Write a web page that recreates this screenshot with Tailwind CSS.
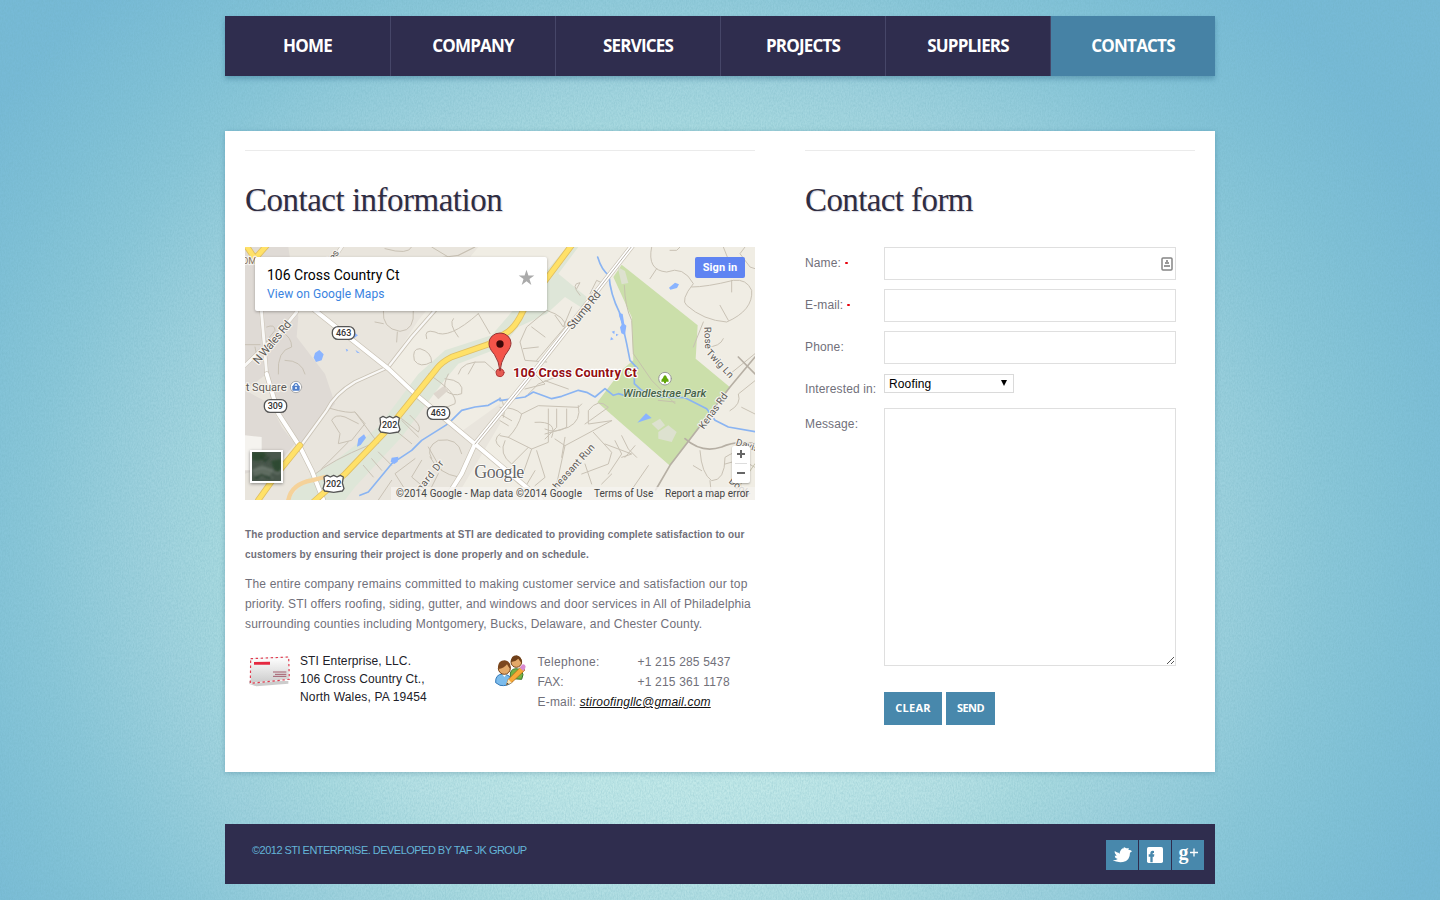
<!DOCTYPE html>
<html lang="en">
<head>
<meta charset="utf-8">
<title>STI Enterprise - Contacts</title>
<script src="https://cdn.jsdelivr.net/npm/@tailwindcss/browser@4"></script>
</head>
<body class="relative h-[900px] overflow-hidden bg-[#78b8d0] font-['Liberation_Sans',sans-serif] text-[12px] leading-5 text-[#71707a]">
<div class="absolute inset-0 -z-10 bg-[radial-gradient(ellipse_840px_740px_at_680px_535px,#c8edec_0%,#c1e8e8_35%,#b7e1e5_46%,#a9dae0_54%,#9fd2de_63%,#8ac7d9_77%,#80c1d7_87%,#77bad6_100%)]"></div>
<svg class="absolute inset-0 -z-10 opacity-30" width="1440" height="900"><filter id="grain" x="0" y="0" width="100%" height="100%"><feTurbulence type="fractalNoise" baseFrequency="0.75 0.4" numOctaves="2" seed="4"/><feColorMatrix values="0 0 0 0 .15  0 0 0 0 .42  0 0 0 0 .5  1.6 0 0 0 -.5"/></filter><rect width="1440" height="900" filter="url(#grain)"/></svg>

<div class="mx-auto flex w-[990px] flex-col pt-4">
  <nav class="grid h-[60px] grid-cols-[166px_165px_165px_165px_165px_164px] bg-[#2f2d4e] text-center font-['Open_Sans',sans-serif] text-[17px] leading-[60px] font-bold tracking-[-0.8px] text-white shadow-[0_3px_5px_rgba(30,90,120,0.35)]">
    <a class="border-r border-[#464668]">HOME</a>
    <a class="border-r border-[#464668]">COMPANY</a>
    <a class="border-r border-[#464668]">SERVICES</a>
    <a class="border-r border-[#464668]">PROJECTS</a>
    <a class="border-r border-[#464668]">SUPPLIERS</a>
    <a class="bg-[#4682a5]">CONTACTS</a>
  </nav>

  <main class="mt-[55px] flex h-[641px] gap-[50px] bg-white px-5 pt-[19px] shadow-[0_1px_5px_rgba(30,90,120,0.3)]">
    <section class="w-[510px] shrink-0 border-t border-[#ebebeb]">
      <h2 class="mt-[29px] h-10 font-['Liberation_Serif',serif] text-[33px] leading-10 tracking-[-0.5px] whitespace-nowrap text-[#2f2d42] [text-shadow:1px_1px_1px_#d5d5df]">Contact information</h2>
      <div class="relative mt-[27px] h-[253px] overflow-hidden font-[Roboto,sans-serif]">
        <svg class="block" width="510" height="253" viewBox="0 0 1530 759" preserveAspectRatio="none" fill="none" stroke-linejoin="round" stroke-linecap="round">
          <rect width="1530" height="759" fill="#f0ede4"/>
          <path fill="#e9e5dd" d="M0 0H700L520 220 430 360 640 560 765 470V530L640 740 620 759H0z"/>
          <path fill="#dfdad5" d="M0 0H130L160 210 155 270 240 381 270 470 165 590 100 500 65 381 0 430zM0 430L75 470 110 540 150 590 100 650 0 680z"/>
          <path fill="#f5f3ef" d="M0 565L50 570V615L15 630V670H0z"/>
          <path fill="#dee6d8" d="M965 0H1000L940 80 1025 150 1015 185 960 150 905 200 820 240 770 300 640 350 590 410 470 570 330 720 300 759H130L180 700 260 650 400 540 520 381 600 310 740 265 830 160z"/>
          <path fill="#cbdfaa" d="M1130 53L1358 235 1352 335 1455 421 1275 656 1057 466 1130 370 1165 340 1160 210 1105 90z"/>
          <path fill="#dde1cf" d="M1118 60L1140 72 1150 108 1130 112zM1220 530l25-15 15 20-20 15zM1240 555l30-20 25 20-15 30-40-10z"/>
          <g stroke="#c9c2b5" stroke-width="3">
            <path d="M390 225L415 230M415 190Q410 245 465 253Q510 250 505 190M457 255L455 285M0 293H45M30 300L40 350M65 240Q90 230 90 250L62 285 110 255Q140 270 140 300 95 310 100 381M180 381Q170 340 120 340M500 0Q490 25 420 5M560 0L610 30M640 25L690 0M545 275Q535 245 570 255 610 280 700 200M625 215Q610 230 640 270M700 200L735 260M560 345Q525 365 508 340 500 305 525 305 560 315 560 345M640 381Q650 340 720 345L760 381M690 345L670 381"/>
            <path d="M255 484Q310 500 330 495L400 590M330 495L360 530 320 580 280 590 285 560 260 520Q270 500 300 510L340 530M310 585L230 665M205 685Q260 640 370 595M440 541L500 590M470 520L520 570M495 505L510 520Q530 540 520 555L470 515M400 615L440 655M380 635L410 670M355 655L385 690M550 381Q640 440 630 470 590 490 560 480M600 395Q660 400 650 440 625 450 600 430 595 410 610 381M560 635Q540 600 580 580 640 570 650 620M555 630Q580 680 640 690M530 640L500 690 560 740M510 635L450 680 500 759M550 600L590 670M580 680L540 759M440 700L400 759M765 560Q740 580 765 600"/>
            <g transform="translate(765 0)"><path d="M140 190Q200 210 195 240L110 340M140 190L80 240 60 285 75 340 140 345M95 240L135 270M70 305L115 300M165 205L190 240 215 180M240 145Q210 110 240 107L230 125M270 140L290 100 310 110M455 0Q440 70 500 75 550 55 580 110 540 160 560 175 610 220 680 225 760 190 755 130 740 95 700 100 620 120 575 120M470 65L450 95M510 10H530L540 0M735 0L720 20 750 60 765 65M670 0L690 50 660 75M695 100V135M660 175L685 220M670 275Q660 300 620 300M690 381L765 320M610 225L580 300"/></g>
            <g transform="translate(0 381)"><path d="M765 100Q810 100 830 120L880 95 1000 100 1010 90M830 120Q820 160 790 190L765 185M790 190L860 225 910 205V105M875 230L900 310 870 335M860 225L830 310M935 105V160L900 195M965 105V160Q930 180 900 165M1000 95Q1010 140 970 160L900 180M1020 150L1090 100Q1060 70 1030 110V150L1100 140M930 195L960 215 935 330M960 190L950 250M1045 175L1100 235 1090 270 1010 300M1100 140L960 215M1080 210L1160 240 1130 250M1130 185L1150 225 1175 250M1110 200L1130 240 1090 300M1100 300L1070 330M1170 215L1140 250M1020 270L1040 330M1210 275L1165 340M850 60L880 30 930 10M900 20L970 45M870 0L900 30 840 45M800 300Q810 330 840 340L870 290M765 120L800 140M765 140L790 155M780 200Q760 240 800 270L850 220M765 70Q785 100 775 130M870 145Q940 140 920 190"/><path d="M1455 110Q1490 90 1480 60L1530 20M1365 230Q1370 300 1400 320 1440 320 1440 250 1470 230 1500 230M1440 270Q1490 250 1530 280M1345 275L1370 290M1395 320L1400 370M1490 100L1530 120M1480 320L1500 360"/></g>
          </g>
          <path d="M1138 115Q1140 180 1160 220L1165 320 1220 400 1290 470M1240 460L1290 465M1455 759L1530 650" stroke="#c5c2ac" stroke-width="3"/>
          <path d="M1232 729L1275 655 1455 420 1530 330M1320 575Q1370 620 1430 600 1470 580 1530 590M1480 330L1530 381" stroke="#b6afa4" stroke-width="5"/>
          <path d="M565 35L640 25 690 0" stroke="#c9c2b5" stroke-width="3"/>
          <path d="M1058 30Q1070 70 1092 85 1095 140 1125 200L1135 245 1145 290 1155 340 1178 365M1168 381V410L1190 430 1240 450 1320 452 1385 485 1410 520 1450 540 1530 554M765 461L840 450 865 435 920 455 950 448 1000 430 1025 436 1050 450 1080 425 1105 445 1120 440 1140 446 1190 430M345 745L370 735 440 650 500 610 530 580 610 530 650 490 690 480 730 475 765 455" stroke="#8ab4f2" stroke-width="5"/>
          <g fill="#8ab4ff"><path d="M210 318l13-9 13 13-6 18-17 5-7-13zM325 255l14 10-12 9zM331 308l14 11-9-2zM302 305l8 4-5 5zM1272 122l18-15 12 5-6 11-20 5zM1121 197l12 4 5 30 6 5-4 28-11-5-4-18 7-10-9-22zM1100 254l9-3-1 11zM1113 260l8 3-8 5zM1098 270l8 7-10 3zM340 575l17-13 6 10-16 22-11 5zM440 632l20-3-2 15-10 7-11-7zM1177 527l26-28 17 14-28 9z"/></g>
          <g stroke="#c9c2b5" stroke-width="12"><path d="M570 190L500 270 430 360 330 405Q270 440 245 490L165 600M155 195L110 250 0 355M175 170L290 0M35 30L50 200 65 381"/></g>
          <g stroke="#f9f8f6"><path stroke-width="7" d="M570 190L500 270 430 360 330 405Q270 440 245 490L165 600"/><path stroke-width="9" d="M155 195L110 250 0 355M175 170L290 0M35 30L50 200 65 381"/></g>
          <g stroke="#c9c2b5" stroke-width="16"><path d="M210 190L430 365 515 445 690 591 890 759M65 381L100 500 165 600 200 670 235 759M1165 -8L870 370 690 591 650 680 600 759"/></g>
          <g stroke="#fff" stroke-width="12"><path d="M210 190L430 365 515 445 690 591 890 759M65 381L100 500 165 600 200 670 235 759M1165 -8L870 370 690 591 650 680 600 759"/></g>
          <path d="M1165 -8L870 370 690 591" stroke="#b9b3aa" stroke-width="3"/>
          <path d="M130 759Q140 710 200 700L240 690" stroke="#f5d29a" stroke-width="13"/>
          <g stroke="#e0bf62" stroke-width="19"><path d="M0 -10L30 35 65 -5M980 -5L905 95 835 190Q810 245 780 260L730 292 620 330Q590 345 575 365L430 545 300 681 205 765M165 595L100 675 40 759"/></g>
          <g stroke="#ffe168" stroke-width="14"><path d="M0 -10L30 35 65 -5M980 -5L905 95 835 190Q810 245 780 260L730 292 620 330Q590 345 575 365L430 545 300 681 205 765M165 595L100 675 40 759"/></g>
          <path d="M565 440L595 418 610 430 580 457z" fill="#ddd6cd"/>

          <g font-family="Roboto, sans-serif" font-size="34" fill="#5d5a56" stroke="#f5f2ed" stroke-width="7" paint-order="stroke">
            <text x="-10" y="51" fill="#8a7562" font-size="29">OM</text>
            <text transform="translate(262 48) rotate(-55)" font-size="29">les</text>
            <text transform="translate(40 353) rotate(-50)" textLength="157">N Wales Rd</text>
            <text transform="translate(982 250) rotate(-51)" textLength="138">Stump Rd</text>
            <text transform="translate(1378 240) rotate(88)" font-size="29" textLength="66">Rose</text>
            <text transform="translate(1382 318) rotate(47)" font-size="29" textLength="105">Twig Ln</text>
            <text transform="translate(1376 548) rotate(-54)" font-size="30" textLength="125">Kenas Rd</text>
            <text transform="translate(937 728) rotate(-48)" font-size="30" textLength="170">heasant Run</text>
            <text transform="translate(528 735) rotate(-51)" font-size="30" textLength="110">nard Dr</text>
            <text transform="translate(1471 594) rotate(17)" font-size="29">Davis</text>
            <text transform="translate(1450 706) rotate(38)" font-size="29">Dooly</text>
            <text x="2" y="431" textLength="123">t Square</text>
            <text x="1134" y="450" font-style="italic" font-weight="500" font-size="33" fill="#47634b" stroke="#e5eeda" stroke-width="5" textLength="250" lengthAdjust="spacingAndGlyphs">Windlestrae Park</text>
          </g>
          <g fill="#fff" stroke="#555" stroke-width="4">
            <rect x="262" y="239" width="67" height="38" rx="17"/><rect x="547" y="479" width="67" height="38" rx="17"/><rect x="58" y="458" width="67" height="38" rx="17"/>
            <path id="us" d="M405 513L414 508 424 513 434 508 444 513 454 508 463 513 460 531 465 548 460 555 434 559 407 555 402 548 407 531z"/><use href="#us" x="-168" y="177"/>
          </g>
          <g font-family="Roboto, sans-serif" font-size="27" font-weight="500" fill="#333" text-anchor="middle"><text x="296" y="268">463</text><text x="580" y="508">463</text><text x="91" y="487">309</text><text x="434" y="544">202</text><text x="266" y="721">202</text></g>
          <circle cx="153" cy="420" r="17" fill="#fff" stroke="#aaa" stroke-width="3"/><rect x="142" y="416" width="22" height="15" rx="2" fill="#507fca"/><path d="M146 417Q153 401 160 417" stroke="#507fca" stroke-width="4"/><circle cx="153" cy="423" r="3" fill="#fff"/>
          <circle cx="1260" cy="395" r="19" fill="#fff" stroke="#999" stroke-width="3"/><path d="M1260 384Q1266 388 1266 393 1272 397 1271 404H1263V409H1257V404H1249Q1248 397 1254 393 1254 388 1260 384z" fill="#62a60a"/>
          <circle cx="765" cy="377" r="12" fill="#e55a52" stroke="#b53a3a" stroke-width="3"/>
          <path d="M765 371Q762 343 748 322C732 304 732 294 732 288A33 30 0 0 1 798 288C798 301 789 312 780 325Q768 345 765 371z" fill="#f45449" stroke="#943132" stroke-width="3"/><circle cx="765" cy="291" r="11" fill="#3d0808"/>
          <text x="804" y="391" font-family="Roboto, sans-serif" font-weight="700" font-size="39" fill="#940f13" stroke="#fff" stroke-width="7" paint-order="stroke" textLength="372">106 Cross Country Ct</text>
          <text x="688" y="693" font-family="Liberation Serif, serif" font-size="54" fill="#666" stroke="#fff" stroke-width="5" paint-order="stroke" textLength="150">Google</text>
        </svg>
        <div class="absolute top-[10px] left-[10px] h-[54px] w-[292px] rounded-[2px] bg-white pt-[9px] pl-3 shadow-[0_1px_3px_rgba(0,0,0,0.3)]">
          <div class="text-[14px] leading-[19px] whitespace-nowrap text-black">106 Cross Country Ct</div>
          <div class="text-[12px] leading-[19px] tracking-[0.07px] whitespace-nowrap text-[#3a84df]">View on Google Maps</div>
          <svg class="absolute top-3 right-3" width="17" height="17" viewBox="0 0 24 24"><path fill="#aaa" d="M12 1l2.700 8H23l-6.800 5 2.600 8.500L12 17.300 5.200 22.500 7.800 14 1 9h8.300z"/></svg>
        </div>
        <div class="absolute top-[10px] right-[10px] h-[21px] w-[50px] rounded-[2px] bg-[#5f84f2] text-center text-[11px] leading-[21px] font-bold tracking-[0.1px] text-white">Sign in</div>
        <div class="absolute top-[203px] left-[5px] size-[33px] border-2 border-white bg-[#48564b] shadow-[0_1px_3px_rgba(0,0,0,0.4)]">
          <svg width="29" height="29" fill="none"><defs><filter id="soft"><feGaussianBlur stdDeviation="0.8"/></filter></defs><g filter="url(#soft)"><path fill="#2f4a30" d="M0 0h12l3 4-8 5-7-1zM19 9l10-2v13l-7-2z"/><path fill="#5f6c61" d="M2 17l8-4 6 3 6 1-4 7-9 2-8-3z"/><path stroke="#77827a" d="M0 19q12-6 20 0t9-1M11 22l10 4"/><path stroke="#2c4230" stroke-width="2" d="M8 4l5 5 4-4M3 26l7-3 9 3"/></g></svg>
        </div>
        <div class="absolute top-[199px] left-[487px] flex h-[37px] w-[18px] flex-col items-center rounded-[2px] bg-white shadow-[0_1px_2px_rgba(0,0,0,0.3)]">
          <svg width="18" height="37" stroke="#666" stroke-width="2"><path d="M5 8h8M9 4v8M5 27h8"/><path stroke="#ddd" stroke-width="1" d="M3 17.500h12"/></svg>
        </div>
        <div class="absolute right-0 bottom-0 flex h-[13px] w-[364px] bg-[#f5f3ef]/80 pl-[5px] text-[10px] leading-[14px] whitespace-nowrap text-[#444]"><span class="w-[198px] tracking-[0.14px]">©2014 Google - Map data ©2014 Google</span><span class="w-[71px]">Terms of Use</span><span class="tracking-[0.02px]">Report a map error</span></div>
      </div>
      <p class="mt-[25px] text-[10px] font-bold tracking-[0.12px] whitespace-nowrap">The production and service departments at STI are dedicated to providing complete satisfaction to our<br>customers by ensuring their project is done properly and on schedule.</p>
      <p class="mt-[9px] tracking-[0.17px] whitespace-nowrap">The entire company remains committed to making customer service and satisfaction our top<br><span class="tracking-[0.13px]">priority. STI offers roofing, siding, gutter, and windows and door services in All of Philadelphia</span><br>surrounding counties including Montgomery, Bucks, Delaware, and Chester County.</p>
      <div class="mt-[17px] flex">
        <svg class="mt-px ml-[3px] w-[42px] shrink-0" width="42" height="36" viewBox="0 0 126 108"><defs><linearGradient id="env" x2="0" y2="1"><stop stop-color="#fff"/><stop offset="1" stop-color="#cbcbcb"/></linearGradient></defs><path d="M3 87h118v8L25 103 4 96z" fill="#999" opacity=".5"/><path d="M8 20L122 15 124 82 7 94z" fill="url(#env)" stroke="#eee" stroke-width="3"/><path d="M8 20L122 15 124 82 7 94z" fill="none" stroke="#e1394d" stroke-width="3.500" stroke-dasharray="7 8"/><path d="M18 30l48-1v9H18z" fill="#e52840"/><path d="M75 60h40M81 67h34M75 73h40" stroke="#974256" stroke-width="2.500"/></svg>
        <p class="mt-px ml-[10px] w-[194px] leading-[18px] tracking-[0.12px] text-[#202028]">STI Enterprise, LLC.<br>106 Cross Country Ct.,<br><span class="tracking-[0.17px]">North Wales, PA 19454</span></p>
        <svg class="mt-px w-8 shrink-0" width="32" height="36" viewBox="0 0 96 108"><path d="M49 72Q47 52 65 50 83 50 87 68L83 82 55 80z" fill="#75b344" stroke="#39752a" stroke-width="3"/><circle cx="67" cy="30" r="16" fill="#e3a969" stroke="#754319" stroke-width="3"/><path d="M51 30Q50 11 68 10 85 14 83 33 77 27 73 20 65 29 51 30z" fill="#704019"/><path d="M5 92Q3 68 25 66 50 66 55 90 40 104 18 100z" fill="#7cbcec" stroke="#3379b8" stroke-width="3"/><path d="M23 64L31 75 40 64" fill="#fff"/><circle cx="31" cy="49" r="18" fill="#e3a969" stroke="#754319" stroke-width="3"/><path d="M13 51Q9 26 32 25 53 29 49 52 42 43 39 37 30 49 13 51z" fill="#7c471e"/><path d="M37 99L43 82 82 43 93 54 53 92z" fill="#f7a936" stroke="#a56218" stroke-width="2"/><path d="M77 47L84 38Q89 35 94 41 97 46 88 57z" fill="#d98ad0"/><path d="M37 99L43 82 53 92z" fill="#ffe6b8"/><path d="M37 99l3-7 4 4z" fill="#333"/></svg>
        <div class="mt-px ml-[12px] w-[218px] tracking-[0.18px] whitespace-nowrap"><div class="flex"><span class="w-[100px] tracking-[0.35px]">Telephone:</span><span>+1 215 285 5437</span></div><div class="flex"><span class="w-[100px] tracking-normal">FAX:</span><span>+1 215 361 1178</span></div><div>E-mail: <a class="text-[#111] italic underline">stiroofingllc@gmail.com</a></div></div>
      </div>
    </section>

    <section class="w-[390px] shrink-0 border-t border-[#ebebeb]">
      <h2 class="mt-[29px] h-10 font-['Liberation_Serif',serif] text-[33px] leading-10 tracking-[-0.6px] whitespace-nowrap text-[#2f2d42] [text-shadow:1px_1px_1px_#d5d5df]">Contact form</h2>
      <form class="mt-[27px] grid grid-cols-[79px_292px] grid-rows-[42px_42px_42px_35px_258px] tracking-[0.14px]">
        <label class="pt-[6px]">Name: <span class="mb-[2px] inline-block h-[2px] w-[3px] rounded-[1px] bg-red-600 align-middle"></span></label><div class="flex h-[33px] items-center justify-end border border-[#dfdfdf] pr-[2px]"><svg width="12" height="14" fill="none"><rect x="1" y="1" width="10" height="12" rx="1" stroke="#858585" stroke-width="1.500"/><path fill="#999" d="M5 3h2v2H5zM4 5h4v2H4zM3 8h6v2H3z"/></svg></div>
        <label class="pt-[6px]">E-mail: <span class="mb-[2px] inline-block h-[2px] w-[3px] rounded-[1px] bg-red-600 align-middle"></span></label><div class="h-[33px] border border-[#dfdfdf]"></div>
        <label class="pt-[6px]">Phone:</label><div class="h-[33px] border border-[#dfdfdf]"></div>
        <label class="pt-[6px] whitespace-nowrap">Interested in:</label><div class="mt-px flex h-[19px] w-[130px] justify-between border border-[#dadada] pr-[6px] pl-1 leading-[18px] text-black"><span>Roofing</span><svg class="mt-[5px]" width="6" height="6"><path d="M0 0h6L3 6z"/></svg></div>
        <label class="pt-[6px]">Message:</label><div class="flex items-end justify-end border border-[#dfdfdf]"><svg width="10" height="10" stroke="#555"><path d="M2 9l7-7M6 9l3-3"/></svg></div>
      </form>
      <div class="mt-[26px] ml-[79px] flex gap-1 font-['Open_Sans',sans-serif] text-[11px] leading-[31px] font-bold text-white"><button class="flex h-[33px] w-[58px] justify-center bg-[#4888ac] tracking-[0.3px]">CLEAR</button><button class="flex h-[33px] w-[49px] justify-center bg-[#4888ac] tracking-[-0.6px]">SEND</button></div>
    </section>
  </main>

  <footer class="mt-[52px] flex h-[60px] justify-between bg-[#2f2d4e] pt-4 pr-[11px] pl-[27px] text-[11px] text-[#64b5d8]">
    <span class="tracking-[-0.52px]">©2012 STI ENTERPRISE. DEVELOPED BY TAF JK GROUP</span>
    <div class="flex gap-px">
      <a class="h-[30px] w-8 bg-[#4888ac]"><svg width="32" height="30" viewBox="0 0 96 90"><path fill="#fff" d="M20 61Q31 61 35 57 26 54 26 47L32 47Q24 41 26 33 34 39 38 38L40 42Q44 24 54 25L53 21 61 25 69 25 67 29 74 31 78 34 72 38Q72 62 51 66 32 68 20 61z"/></svg></a>
      <a class="h-[30px] w-8 bg-[#4888ac]"><svg width="32" height="30" viewBox="0 0 96 90"><rect x="24" y="21" width="48" height="48" rx="5" fill="#fff"/><path d="M34 67V50H29V43H34V38Q35 31 45 33V39Q40 38 41 43H46L45 50H41V67z" fill="#4888ac"/></svg></a>
      <a class="flex h-[30px] w-8 justify-center bg-[#4888ac] font-['Liberation_Serif',serif] text-[20px] leading-[24px] font-bold text-white">g<svg class="mt-2 ml-px" width="8" height="9" stroke="#fff" stroke-width="1.300"><path d="M0 4.500h8M4 .5v8"/></svg></a>
    </div>
  </footer>
</div>
</body>
</html>
